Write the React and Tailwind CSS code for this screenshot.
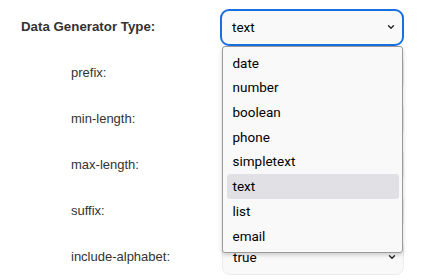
import { ChevronDown } from "lucide-react";

const options = ["date", "number", "boolean", "phone", "simpletext", "text", "list", "email"];
const params = ["prefix:", "min-length:", "max-length:", "suffix:", "include-alphabet:"];

function Field({ value }) {
    return (
        <div className="ml-[222px] w-[182px] h-[36px] rounded-lg border border-[#ececec] bg-[#f9f9f9] flex items-center justify-between pl-[10px] pr-[6px] font-['Roboto',sans-serif] text-[13.5px] text-black">
            <span className="mt-[1px]">{value}</span>
            {value ? <ChevronDown size={10} strokeWidth={3.2} className="text-[#222]" /> : null}
        </div>
    )
}

export default function App() {
    return (
        <div className="relative w-[424px] h-[280px] bg-white pt-[9px] overflow-hidden font-['Liberation_Sans',Arial,sans-serif] text-[#333]">
            <div className="flex flex-col gap-[10px]">
                <div className="relative flex items-center h-[36px]">
                    <span className="absolute left-[21px] text-[13.3px] font-bold">Data Generator Type:</span>
                    <div className="ml-[220px] w-[184px] h-[37px] rounded-[9px] border-2 border-[#1a6fe0] bg-[#f9f9f9] flex items-center justify-between pl-[10px] pr-[6px] font-['Roboto',sans-serif] text-[13.5px] text-black">
                        <span>text</span>
                        <ChevronDown size={10} strokeWidth={3.2} className="text-[#222]" />
                    </div>
                </div>
                {params.map((p, i) => (
                    <div key={p} className="relative flex items-center h-[36px]">
                        <span className="absolute left-[71px] text-[13px]">{p}</span>
                        <Field value={i === params.length - 1 ? "true" : ""} />
                    </div>
                ))}
            </div>

            <div className="absolute left-[222px] top-[46px] w-[181px] rounded-[3px] border border-[#9b9b9b] bg-[#f9f9f9] shadow-[0_2px_4px_rgba(0,0,0,0.18)] p-[3.5px] font-['Roboto',sans-serif] text-[13.5px] text-black">
                {options.map((o) => (
                    <div
                        key={o}
                        className={"h-[24.7px] flex items-center pl-[6px] rounded-[3px] " + (o === "text" ? "bg-[#e1e0e5]" : "")}
                    >
                        {o}
                    </div>
                ))}
            </div>
        </div>
    )
}
